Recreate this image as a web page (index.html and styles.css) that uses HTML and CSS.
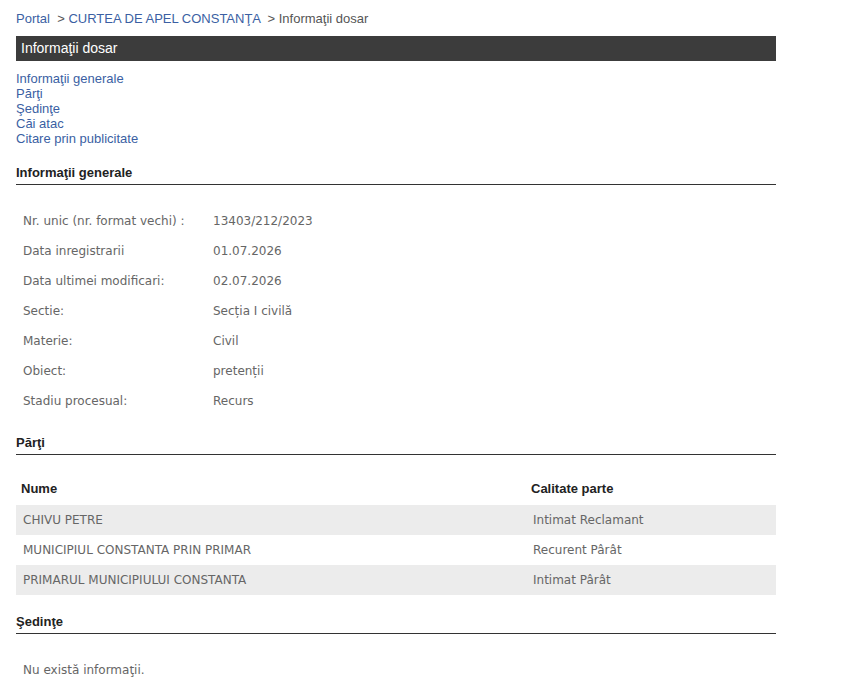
FILE: index.html
```html
<!DOCTYPE html>
<html lang="ro">
<head>
  <meta charset="UTF-8" />
  <title>Informaţii dosar</title>
  <link rel="stylesheet" href="styles.css">
</head>
<body>

<div class="page">
  <div class="breadcrumb">
    <a href="#">Portal</a> &nbsp;&gt; <a href="#">CURTEA DE APEL CONSTANŢA</a> &nbsp;&gt; Informaţii dosar
  </div>

  <h1 class="bar">Informaţii dosar</h1>

  <ul class="nav">
    <li><a href="#generale">Informaţii generale</a></li>
    <li><a href="#parti">Părţi</a></li>
    <li><a href="#sedinte">Şedinţe</a></li>
    <li><a href="#cai">Căi atac</a></li>
    <li><a href="#citare">Citare prin publicitate</a></li>
  </ul>

  <h2 class="section" id="generale">Informaţii generale</h2>
  <table class="info">
    <colgroup><col class="label-col"><col></colgroup>
    <tr><td>Nr. unic (nr. format vechi) :</td><td>13403/212/2023</td></tr>
    <tr><td>Data inregistrarii</td><td>01.07.2026</td></tr>
    <tr><td>Data ultimei modificari:</td><td>02.07.2026</td></tr>
    <tr><td>Sectie:</td><td>Secția I civilă</td></tr>
    <tr><td>Materie:</td><td>Civil</td></tr>
    <tr><td>Obiect:</td><td>pretenții</td></tr>
    <tr><td>Stadiu procesual:</td><td>Recurs</td></tr>
  </table>

  <h2 class="section" id="parti">Părţi</h2>
  <table class="parti">
    <colgroup><col class="name-col"><col></colgroup>
    <thead>
      <tr><th>Nume</th><th>Calitate parte</th></tr>
    </thead>
    <tbody>
      <tr class="odd"><td>CHIVU PETRE</td><td>Intimat Reclamant</td></tr>
      <tr><td>MUNICIPIUL CONSTANTA PRIN PRIMAR</td><td>Recurent Pârât</td></tr>
      <tr class="odd"><td>PRIMARUL MUNICIPIULUI CONSTANTA</td><td>Intimat Pârât</td></tr>
    </tbody>
  </table>

  <h2 class="section" id="sedinte">Şedinţe</h2>
  <p class="empty">Nu există informaţii.</p>
</div>

</body>
</html>
```

FILE: styles.css
```css
body {
  margin: 0;
  font-family: 'Liberation Sans', Arial, sans-serif;
  font-size: 13px;
  color: #333;
  background: #fff;
}
a {
  color: #3b5fa3;
  text-decoration: none;
}
.page {
  width: 760px;
  padding: 11px 16px 10px;
}
.breadcrumb {
  color: #555;
  line-height: 16px;
  margin-bottom: 9px;
}
.bar {
  margin: 0;
  background: #3c3c3c;
  color: #fff;
  font-size: 14px;
  font-weight: normal;
  line-height: 25px;
  padding: 0 5px;
}
.nav {
  list-style: none;
  margin: 10px 0 0;
  padding: 0;
  line-height: 15px;
}
.section {
  margin: 19px 0 0;
  font-size: 13px;
  font-weight: bold;
  color: #222;
  line-height: 16px;
  padding-bottom: 3px;
  border-bottom: 1px solid #333;
}
.info, .parti {
  width: 100%;
  table-layout: fixed;
  border-collapse: collapse;
  font-family: 'DejaVu Sans', Tahoma, sans-serif;
  font-size: 12px;
  color: #666;
}
.info {
  margin-top: 21px;
}
.info .label-col {
  width: 190px;
}
.info td {
  height: 30px;
  padding: 0 7px;
}
.parti {
  margin-top: 20px;
}
.parti .name-col {
  width: 510px;
}
.parti th {
  text-align: left;
  font-family: 'Liberation Sans', Arial, sans-serif;
  font-size: 13px;
  font-weight: bold;
  color: #222;
  height: 26px;
  padding: 0 5px 4px;
}
.parti td {
  height: 30px;
  padding: 0 7px;
}
.parti .odd {
  background: #ececec;
}
.empty {
  margin: 29px 0 0;
  padding-left: 7px;
  font-family: 'DejaVu Sans', Tahoma, sans-serif;
  font-size: 12px;
  color: #666;
}
```
